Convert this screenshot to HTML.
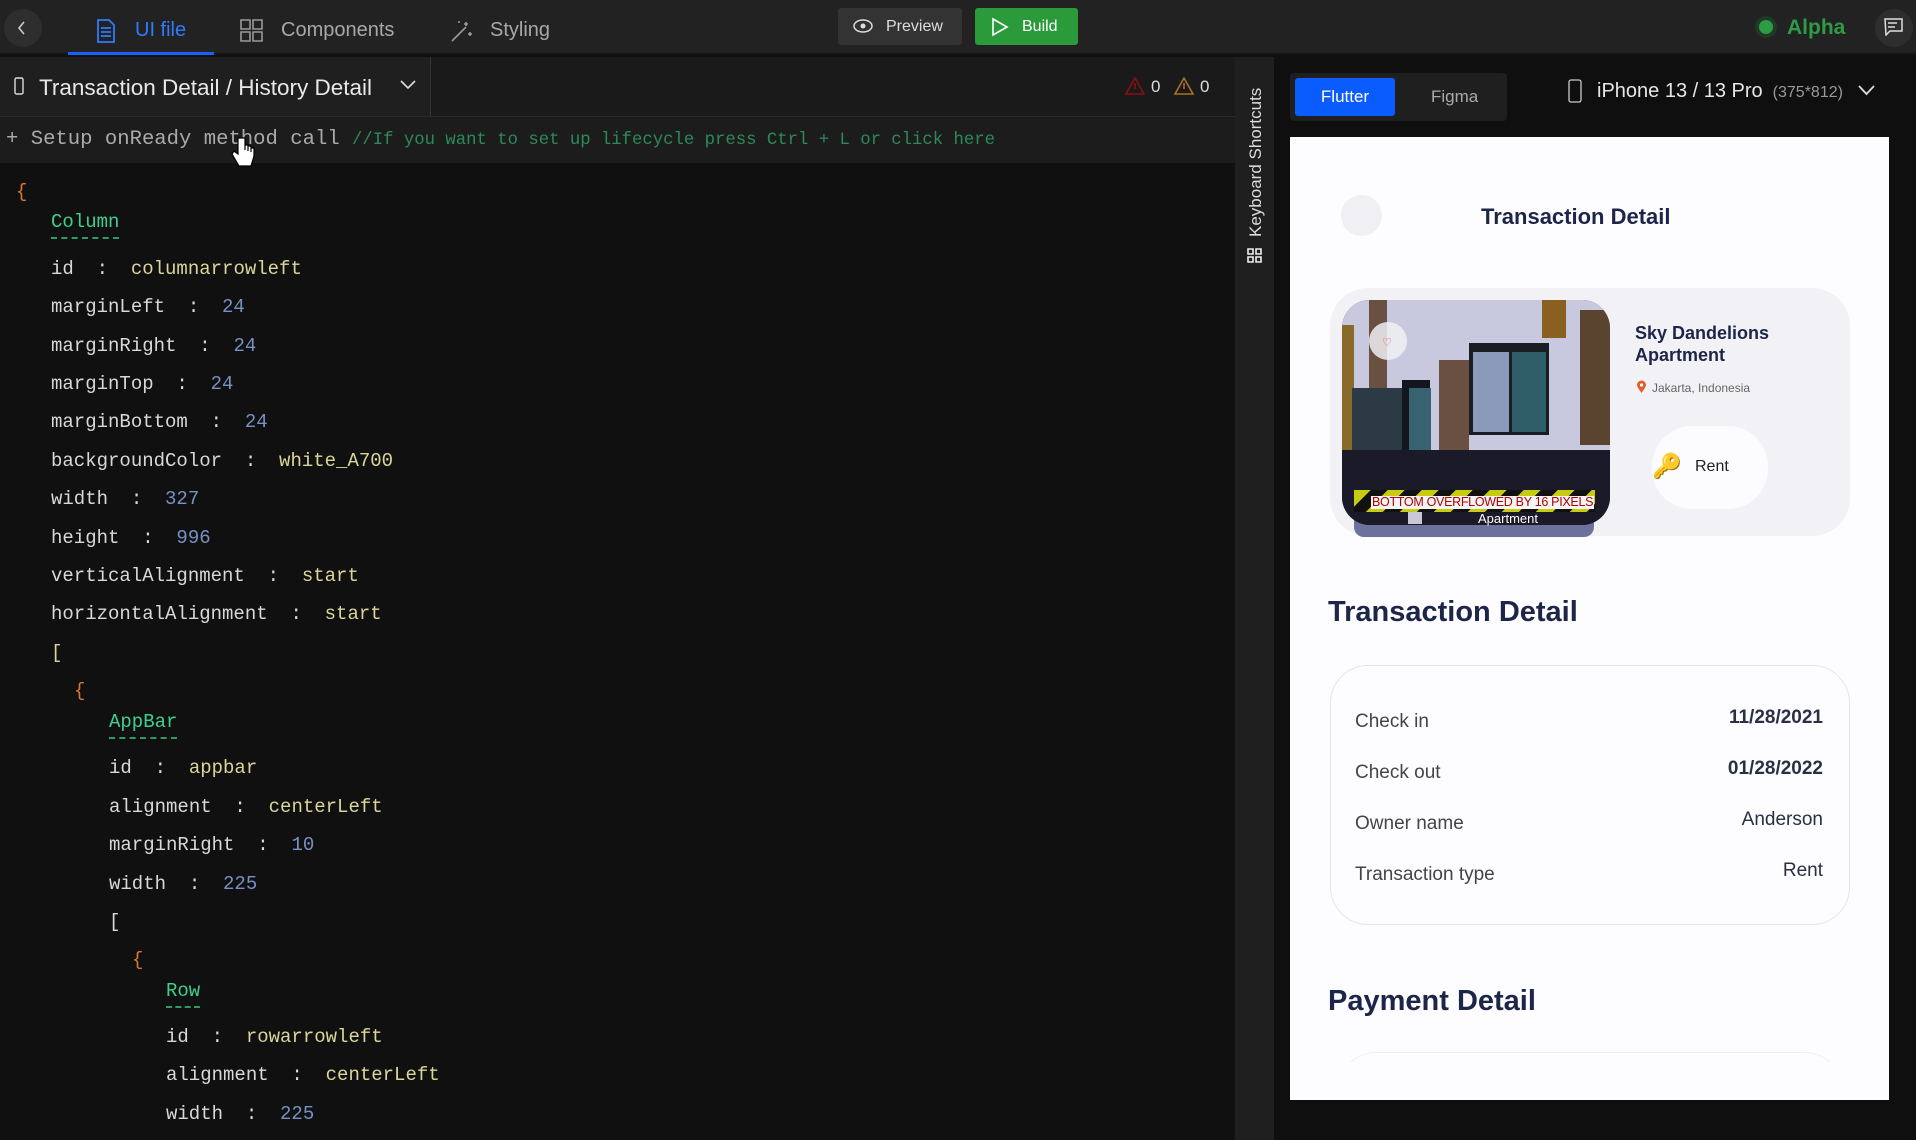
<!DOCTYPE html>
<html><head><meta charset="utf-8">
<style>
*{margin:0;padding:0;box-sizing:border-box}
body{width:1916px;height:1140px;overflow:hidden;background:#0f0f0f;font-family:"Liberation Sans",sans-serif;position:relative}
.a{position:absolute}
.top{left:0;top:0;width:1916px;height:55px;background:#222;border-bottom:2px solid #141414}
.tab{top:19px;font-size:20px;color:#a8a8a8}
.code{font-family:"Liberation Mono",monospace;font-size:19px;white-space:pre;line-height:24px}
.k{color:#d8d8d8}.s{color:#dcd59a}.n{color:#7891c4}.w{color:#3fcf8e;border-bottom:2px dashed #2f9a66;padding-bottom:4px}.b{color:#d77a2c}
.ph{font-family:"Liberation Sans",sans-serif;color:#1d2548}
</style></head><body>
<div class="a top"></div>
<div class="a" style="left:4px;top:9px;width:38px;height:38px;border-radius:50%;background:#2e2e2e"></div>
<svg class="a" style="left:17px;top:20px" width="10" height="16"><path d="M7 2 L2 8 L7 14" stroke="#ccc" stroke-width="1.6" fill="none"/></svg>
<svg class="a" style="left:96px;top:19px" width="20" height="24"><path d="M2 1h11l5 5v17H2z M5 9h10 M5 13h10 M5 17h10" stroke="#2f7bff" stroke-width="1.8" fill="none"/></svg>
<div class="a tab" style="left:135px;color:#2f7bff">UI file</div>
<div class="a" style="left:68px;top:52px;width:146px;height:3px;background:#1760ff"></div>
<svg class="a" style="left:240px;top:19px" width="23" height="23"><path d="M1 1h9v9H1z M13 1h9v9h-9z M1 13h9v9H1z M13 13h9v9h-9z" stroke="#999" stroke-width="1.6" fill="none"/></svg>
<div class="a tab" style="left:281px">Components</div>
<svg class="a" style="left:450px;top:19px" width="24" height="24"><path d="M2 22 L16 8 M16 3v4 M14 5h4 M20 13v4 M18 15h4 M9 2v2" stroke="#999" stroke-width="1.6" fill="none"/></svg>
<div class="a tab" style="left:490px">Styling</div>
<div class="a" style="left:838px;top:8px;width:124px;height:37px;background:#333;border-radius:3px;color:#ddd;font-size:16px;line-height:37px;padding-left:48px">Preview</div>
<svg class="a" style="left:853px;top:19px" width="20" height="14"><ellipse cx="10" cy="7" rx="9" ry="6" stroke="#ddd" stroke-width="1.5" fill="none"/><circle cx="10" cy="7" r="2.5" fill="#ddd"/></svg>
<div class="a" style="left:975px;top:8px;width:103px;height:37px;background:#2a9a3a;border-radius:3px;color:#fff;font-size:16px;line-height:37px;padding-left:47px">Build</div>
<svg class="a" style="left:991px;top:17px" width="18" height="20"><path d="M2 2 L16 10 L2 18z" stroke="#fff" stroke-width="1.6" fill="none"/></svg>
<div class="a" style="left:1759px;top:20px;width:14px;height:14px;border-radius:50%;background:#2e9b45;box-shadow:0 0 0 4px #1f3a24"></div>
<div class="a" style="left:1787px;top:16px;font-size:21px;font-weight:bold;color:#2e9b45">Alpha</div>
<div class="a" style="left:1875px;top:9px;width:38px;height:38px;border-radius:50%;background:#2e2e2e"></div>
<svg class="a" style="left:1884px;top:18px" width="20" height="18"><path d="M1 1h17v12H6l-4 4z M4 5h9 M4 9h7" stroke="#ddd" stroke-width="1.5" fill="none"/></svg>

<!-- editor -->
<div class="a" style="left:0;top:57px;width:1235px;height:1083px;background:#101010"></div>
<div class="a" style="left:0;top:57px;width:1235px;height:59px;background:#1a1a1a"></div>
<div class="a" style="left:0;top:57px;width:431px;height:59px;background:#1f1f1f;border-right:1px solid #333"></div>
<svg class="a" style="left:14px;top:77px" width="10" height="18"><rect x="1" y="1" width="8" height="16" rx="1.5" stroke="#ddd" stroke-width="1.4" fill="none"/></svg>
<div class="a" style="left:39px;top:75px;font-size:22.5px;color:#e8e8e8">Transaction Detail / History Detail</div>
<svg class="a" style="left:400px;top:80px" width="16" height="10"><path d="M1 1 L8 8 L15 1" stroke="#ddd" stroke-width="1.6" fill="none"/></svg>
<svg class="a" style="left:1125px;top:77px" width="20" height="18"><path d="M10 1 L19 17 H1z M10 6v6" stroke="#8a1010" stroke-width="1.6" fill="none"/></svg>
<div class="a" style="left:1151px;top:77px;font-size:17px;color:#ddd">0</div>
<svg class="a" style="left:1174px;top:77px" width="20" height="18"><path d="M10 1 L19 17 H1z M10 6v6" stroke="#a8702a" stroke-width="1.6" fill="none"/></svg>
<div class="a" style="left:1200px;top:77px;font-size:17px;color:#ddd">0</div>
<div class="a" style="left:0;top:116px;width:1235px;height:47px;background:#1c1c1c;border-top:1px solid #2a2a2a"></div>
<div class="a code" style="left:6px;top:128px;font-size:20.6px"><span style="color:#aaa">+ Setup onReady method call </span><span style="color:#2c8a58;font-size:17.3px">//If you want to set up lifecycle press Ctrl + L or click here</span></div>
<svg class="a" style="left:230px;top:136px" width="28" height="34"><path d="M8 2 v16 l-4-3 -2 3 7 12 h12 l3-10 v-8 h-3 v4 -6 h-3 v5 -6 h-3 v5 V2z" fill="#fff" stroke="#000" stroke-width="1.2"/></svg>

<div class="a code" style="left:16px;top:180px"><span class="b">{</span></div>
<div class="a code" style="left:51px;top:210px"><span class="w">Column</span></div>
<div class="a code" style="left:51px;top:257px"><span class="k">id  :  </span><span class="s">columnarrowleft</span></div>
<div class="a code" style="left:51px;top:295px"><span class="k">marginLeft  :  </span><span class="n">24</span></div>
<div class="a code" style="left:51px;top:334px"><span class="k">marginRight  :  </span><span class="n">24</span></div>
<div class="a code" style="left:51px;top:372px"><span class="k">marginTop  :  </span><span class="n">24</span></div>
<div class="a code" style="left:51px;top:410px"><span class="k">marginBottom  :  </span><span class="n">24</span></div>
<div class="a code" style="left:51px;top:449px"><span class="k">backgroundColor  :  </span><span class="s">white_A700</span></div>
<div class="a code" style="left:51px;top:487px"><span class="k">width  :  </span><span class="n">327</span></div>
<div class="a code" style="left:51px;top:526px"><span class="k">height  :  </span><span class="n">996</span></div>
<div class="a code" style="left:51px;top:564px"><span class="k">verticalAlignment  :  </span><span class="s">start</span></div>
<div class="a code" style="left:51px;top:602px"><span class="k">horizontalAlignment  :  </span><span class="s">start</span></div>
<div class="a code" style="left:51px;top:641px"><span class="s">[</span></div>
<div class="a code" style="left:74px;top:679px"><span class="b">{</span></div>
<div class="a code" style="left:109px;top:710px"><span class="w">AppBar</span></div>
<div class="a code" style="left:109px;top:756px"><span class="k">id  :  </span><span class="s">appbar</span></div>
<div class="a code" style="left:109px;top:795px"><span class="k">alignment  :  </span><span class="s">centerLeft</span></div>
<div class="a code" style="left:109px;top:833px"><span class="k">marginRight  :  </span><span class="n">10</span></div>
<div class="a code" style="left:109px;top:872px"><span class="k">width  :  </span><span class="n">225</span></div>
<div class="a code" style="left:109px;top:910px"><span class="k">[</span></div>
<div class="a code" style="left:132px;top:948px"><span class="b">{</span></div>
<div class="a code" style="left:166px;top:979px"><span class="w">Row</span></div>
<div class="a code" style="left:166px;top:1025px"><span class="k">id  :  </span><span class="s">rowarrowleft</span></div>
<div class="a code" style="left:166px;top:1063px"><span class="k">alignment  :  </span><span class="s">centerLeft</span></div>
<div class="a code" style="left:166px;top:1102px"><span class="k">width  :  </span><span class="n">225</span></div>

<!-- vertical strip -->
<div class="a" style="left:1235px;top:57px;width:39px;height:1083px;background:#1f1f1f"></div>
<div class="a" style="left:1246px;top:237px;transform:rotate(-90deg);transform-origin:0 0;font-size:17px;color:#ddd;white-space:nowrap;width:160px">Keyboard Shortcuts</div>
<svg class="a" style="left:1247px;top:248px" width="15" height="15"><path d="M1 1h5v5H1z M9 1h5v5H9z M1 9h5v5H1z M9 9h5v5H9z" stroke="#eee" stroke-width="1.6" fill="none"/></svg>

<!-- right panel header -->
<div class="a" style="left:1290px;top:73px;width:217px;height:48px;background:#1f1f1f;border-radius:4px"></div>
<div class="a" style="left:1295px;top:78px;width:100px;height:38px;background:#0a5cff;border-radius:3px;color:#fff;font-size:17px;line-height:38px;text-align:center">Flutter</div>
<div class="a" style="left:1431px;top:87px;font-size:17px;color:#aaa">Figma</div>
<svg class="a" style="left:1568px;top:79px" width="14" height="24"><rect x="1" y="1" width="12" height="22" rx="2" stroke="#ccc" stroke-width="1.3" fill="none"/></svg>
<div class="a" style="left:1597px;top:80px;font-size:20px;color:#e6e6e6">iPhone 13 / 13 Pro <span style="font-size:16px;color:#999">&nbsp;(375*812)</span></div>
<svg class="a" style="left:1858px;top:85px" width="17" height="11"><path d="M1 1 L8.5 9 L16 1" stroke="#ddd" stroke-width="1.8" fill="none"/></svg>

<!-- phone -->
<div class="a" style="left:1290px;top:137px;width:599px;height:963px;background:#fdfdff;overflow:hidden">
<div class="a" style="left:48px;top:915px;width:505px;height:80px;border-radius:38px 38px 0 0;border:1.5px solid #eeeef6;border-bottom:none"></div>
<div class="a" style="left:0;top:925px;width:599px;height:40px;background:#fdfdff"></div>
</div>
<div class="a" style="left:1341px;top:195px;width:41px;height:41px;border-radius:50%;background:#f0f0f4"></div>
<div class="a ph" style="left:1481px;top:204px;font-size:22px;font-weight:bold">Transaction Detail</div>
<div class="a" style="left:1330px;top:288px;width:520px;height:248px;border-radius:38px;background:#f2f2f6"></div>
<div class="a" style="left:1354px;top:500px;width:240px;height:37px;border-radius:0 0 10px 10px;background:#6d729c"></div>
<div class="a" style="left:1342px;top:300px;width:268px;height:225px;border-radius:28px;overflow:hidden;background:#1c1c2c">
 <div class="a" style="left:0;top:0;width:268px;height:150px;background:#c8c8de"></div>
 <div class="a" style="left:0;top:25px;width:12px;height:140px;background:#8a6a2a"></div>
 <div class="a" style="left:27px;top:0;width:18px;height:160px;background:#6a5040"></div>
 <div class="a" style="left:10px;top:88px;width:50px;height:62px;background:#2b3a44"></div>
 <div class="a" style="left:60px;top:80px;width:28px;height:73px;background:#14161e"></div>
 <div class="a" style="left:67px;top:88px;width:22px;height:62px;background:#386270"></div>
 <div class="a" style="left:97px;top:60px;width:30px;height:95px;background:#6a5040"></div>
 <div class="a" style="left:127px;top:43px;width:80px;height:92px;background:#1a1d24"></div>
 <div class="a" style="left:131px;top:52px;width:36px;height:80px;background:#8a9ab8"></div>
 <div class="a" style="left:170px;top:52px;width:34px;height:80px;background:#2f5d68"></div>
 <div class="a" style="left:200px;top:0;width:24px;height:38px;background:#8a6020"></div>
 <div class="a" style="left:238px;top:10px;width:30px;height:135px;background:#5a4430"></div>
 <div class="a" style="left:0;top:150px;width:268px;height:75px;background:#1a1a28"></div>
 <div class="a" style="left:27px;top:22px;width:38px;height:38px;border-radius:50%;background:rgba(240,240,245,.85)"></div>
 <div class="a" style="left:40px;top:36px;color:#e04040;font-size:11px">♡</div>
</div>
<div class="a" style="left:1354px;top:490px;width:241px;height:22px;background:repeating-linear-gradient(135deg,#c8cc10 0 12px,#111 12px 24px)"></div>
<div class="a" style="left:1371px;top:496px;background:#f5f5f5;color:#b00000;font-size:12.5px;line-height:13px;padding:0 1px;letter-spacing:-.3px">BOTTOM OVERFLOWED BY 16 PIXELS</div>
<div class="a" style="left:1478px;top:511px;color:#fff;font-size:13px">Apartment</div>
<div class="a" style="left:1408px;top:512px;width:14px;height:12px;background:#c8c8d8"></div>
<div class="a ph" style="left:1635px;top:322px;font-size:18px;font-weight:bold;line-height:22px">Sky Dandelions<br>Apartment</div>
<svg class="a" style="left:1636px;top:380px" width="11" height="14"><path d="M5.5 13 C1 7 1 5 1 5 a4.5 4.5 0 0 1 9 0 C10 5 10 7 5.5 13z" fill="#e0602a"/><circle cx="5.5" cy="5" r="1.6" fill="#fff"/></svg>
<div class="a" style="left:1652px;top:381px;font-size:12px;color:#666">Jakarta, Indonesia</div>
<div class="a" style="left:1652px;top:426px;width:116px;height:83px;border-radius:40px;background:#fcfcfe"></div>
<div class="a" style="left:1652px;top:452px;font-size:24px;color:#e8a818">🔑</div>
<div class="a" style="left:1695px;top:458px;font-size:16px;color:#222">Rent</div>

<div class="a ph" style="left:1328px;top:596px;font-size:29px;font-weight:bold">Transaction Detail</div>
<div class="a" style="left:1330px;top:665px;width:520px;height:260px;border-radius:38px;border:1.5px solid #e4e4f0;background:#fdfdff"></div>
<div class="a" style="left:1355px;top:696px;font-size:19px;color:#444;line-height:51px">Check in<br>Check out<br>Owner name<br>Transaction type</div>
<div class="a" style="left:1600px;top:692px;width:223px;text-align:right;font-size:19px;color:#2a2f45;line-height:51px"><b>11/28/2021</b><br><b>01/28/2022</b><br>Anderson<br>Rent</div>
<div class="a ph" style="left:1328px;top:985px;font-size:29px;font-weight:bold">Payment Detail</div>
</body></html>
